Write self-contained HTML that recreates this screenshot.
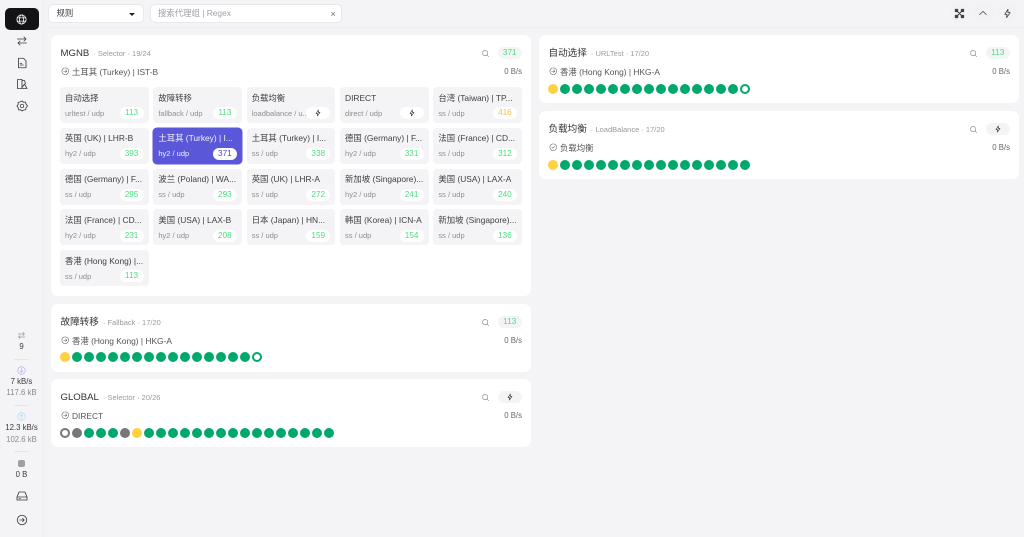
<!DOCTYPE html>
<html lang="zh"><head><meta charset="utf-8"><title>Proxies</title>
<style>
*{box-sizing:border-box;margin:0;padding:0}
html,body{width:1024px;height:537px;overflow:hidden;background:#f4f4f6}
body{font-family:"Liberation Sans","Noto Sans CJK SC",sans-serif;color:#3a3a3c;position:relative;font-size:8.4px;filter:blur(.25px)}
.abs{position:absolute}
.side{left:0;top:0;width:44px;height:537px;border-right:1px solid #efeff1}
.top{left:44px;top:0;width:980px;height:28px;border-bottom:1px solid #efeff1}
.act{left:5px;top:8px;width:34px;height:22px;background:#131315;border-radius:5px}
.ic{position:absolute;fill:none;stroke:#3c3c3e;stroke-width:1.7;stroke-linecap:round;stroke-linejoin:round}
.st{position:absolute;left:0;width:43px;text-align:center;font-size:7.8px;line-height:10px;white-space:nowrap}
.g{color:#8a8a8e}
.sep{position:absolute;left:14px;width:15px;height:1px;background:#e6e6e9}
.box{position:absolute;top:4px;height:18.5px;background:#fff;border:1px solid #e8e8ec;border-radius:5px;line-height:16.5px;white-space:nowrap}
.tb{position:absolute;top:4px;width:19px;height:19px;border-radius:50%;background:#f2f2f4}
.card{position:absolute;background:#fff;border-radius:7px;width:480px}
.title{position:absolute;left:9.5px;top:12.5px;font-size:9.6px;line-height:12px;white-space:nowrap;color:#333}
.title span{font-size:7.5px;color:#9a9a9e;margin-left:4px}
.cur{position:absolute;left:21px;top:30.5px;font-size:8.4px;line-height:12px;white-space:nowrap;color:#555}
.speed{position:absolute;right:9px;top:30.5px;font-size:7.8px;line-height:12px;color:#666}
.pill{position:absolute;right:9.5px;top:12px;width:23.5px;height:12px;border-radius:6px;background:#f4f4f6;text-align:center;font-size:8.2px;line-height:12px;color:#4ade80}
.grid{position:absolute;left:9px;top:52px;width:462px;display:grid;grid-template-columns:repeat(5,88.56px);grid-auto-rows:36px;gap:4.8px}
.t{position:relative;background:#f4f4f6;border-radius:4px;height:36px}
.n{position:absolute;left:5px;top:4.5px;font-size:8.4px;line-height:12px;white-space:nowrap;color:#3f3f42}
.s{position:absolute;left:5px;top:21.5px;font-size:7.5px;line-height:10px;white-space:nowrap;color:#8e8e92}
.d{position:absolute;right:5px;top:20.2px;width:24px;height:12px;border-radius:6px;background:#fff;text-align:center;font-size:8.2px;line-height:12px;color:#4ade80}
.y{color:#fbbf4a}
.on{background:#5b57d9;box-shadow:0 0 0 .5px #5b57d9}
.on .n,.on .s{color:#f2f2ff}
.on .d{color:#4a46c8}
.dots{position:absolute;left:9px;display:flex;gap:2px}
.dots i{display:block;width:10px;height:10px;border-radius:50%;background:#00a96b}
.dots i.a{background:#fdd13f}
.dots i.b{background:#777}
.dots i.o{background:#fff;border:2.4px solid #00a96b}
.dots i.p{background:#fff;border:2.4px solid #777}
</style></head><body>
<svg width="0" height="0" style="position:absolute"><defs>
<symbol id="bolt" viewBox="0 0 24 24"><path d="M13 3 6 14h5l-1 7 8-11h-5z"/></symbol>
<symbol id="search" viewBox="0 0 24 24"><circle cx="11" cy="11" r="7"/><path d="m16.5 16.5 4 4"/></symbol>
<symbol id="circ" viewBox="0 0 24 24"><circle cx="12" cy="12" r="9.5"/><path d="M7.5 12h9M13 8.5l3.5 3.5-3.5 3.5"/></symbol>
<symbol id="check" viewBox="0 0 24 24"><circle cx="12" cy="12" r="9.5"/><path d="m8 12 3 3 5-6"/></symbol>
<symbol id="swap" viewBox="0 0 24 24"><path d="M3 8h17M16 4l4 4-4 4M21 16H4M8 12l-4 4 4 4"/></symbol>
</defs></svg>

<div class="abs side">
<div class="abs act"></div>
<svg class="ic" style="left:16px;top:13.5px;stroke:#fff" width="11" height="11" viewBox="0 0 24 24"><circle cx="12" cy="12" r="10"/><ellipse cx="12" cy="12" rx="4.5" ry="10"/><path d="M2.5 8.5h19M2.5 15.5h19"/></svg>
<svg class="ic" style="left:15.500px;top:35px" width="12" height="12"><use href="#swap"/></svg>
<svg class="ic" style="left:15.500px;top:56.500px" width="12" height="12" viewBox="0 0 24 24"><path d="M5 2.500h10l5 5v14H5zM8.500 16h6M8.500 13h3"/></svg>
<svg class="ic" style="left:15.500px;top:78px" width="12" height="12" viewBox="0 0 24 24"><path d="M3 3h9v18H3zM12 5h5l2 6M12 21h10l-5-9-5 7"/></svg>
<svg class="ic" style="left:15.500px;top:100px" width="12" height="12" viewBox="0 0 24 24"><circle cx="12" cy="12" r="3.500"/><path d="M12 2l3 2.500 4-.5 1 4 3 4-3 3.500-.5 4-4 .5L12 22l-3-2.500-4 .5-.5-4L2 12l2.500-3.500-.5-4 4-.5z"/></svg>

<svg class="ic" style="left:17px;top:331px;stroke:#999" width="9" height="9"><use href="#swap"/></svg>
<div class="st" style="top:342px">9</div>
<div class="sep" style="top:359px"></div>
<svg class="ic" style="left:17px;top:366px;stroke:#b4b0f0" width="9" height="9" viewBox="0 0 24 24"><circle cx="12" cy="12" r="10"/><path d="M12 6v11M8 13l4 4 4-4"/></svg>
<div class="st" style="top:377px">7 kB/s</div>
<div class="st g" style="top:388px">117.6 kB</div>
<div class="sep" style="top:405px"></div>
<svg class="ic" style="left:17px;top:412px;stroke:#a5dcf8" width="9" height="9" viewBox="0 0 24 24"><circle cx="12" cy="12" r="10"/><path d="M12 18V7M8 11l4-4 4 4"/></svg>
<div class="st" style="top:423px">12.3 kB/s</div>
<div class="st g" style="top:435px">102.6 kB</div>
<div class="sep" style="top:451px"></div>
<div class="abs" style="left:18px;top:459.500px;width:7px;height:7px;border-radius:2px;background:#a0a0a3"></div>
<div class="st" style="top:470px">0 B</div>
<svg class="ic" style="left:15.500px;top:490px" width="12" height="12" viewBox="0 0 24 24"><path d="M6 4h12l4 10v6H2v-6zM2 14h20M6 17.500h3"/></svg>
<svg class="ic" style="left:15.500px;top:514px" width="12" height="12"><use href="#circ"/></svg>
</div>

<div class="abs top"></div>
<div class="box" style="left:48px;width:96px;padding-left:7.500px">规则<span class="abs" style="left:80px;top:7.500px;width:0;height:0;border:3px solid transparent;border-top:3px solid #222"></span></div>
<div class="box" style="left:149.500px;width:192.500px;padding-left:7.500px;color:#a0a0a4">搜索代理组 | Regex<span class="abs" style="left:180px;top:.5px;color:#666;font-size:9px">×</span></div>
<div class="tb" style="left:949.500px"></div><div class="tb" style="left:973.500px"></div><div class="tb" style="left:997.500px"></div>
<svg class="ic" style="left:953.500px;top:7.500px;stroke-width:2.200" width="11" height="11" viewBox="0 0 24 24"><path d="M3 3l18 18M21 3 3 21M3 3h5v5H3zM16 16h5v5h-5zM16 3h5v5h-5zM3 16h5v5H3z"/></svg>
<svg class="ic" style="left:978px;top:8px" width="10" height="10" viewBox="0 0 24 24"><path d="m4 16 8-8 8 8"/></svg>
<svg class="ic" style="left:1001.500px;top:7.500px" width="11" height="11"><use href="#bolt"/></svg>

<div class="card" style="left:51px;top:35px;height:261px">
<div class="title">MGNB<span>· Selector · 19/24</span></div>
<svg class="ic" style="left:9.750px;top:32px;stroke:#666;stroke-width:1.600" width="8.500" height="8.500"><use href="#circ"/></svg>
<div class="cur">土耳其 (Turkey) | IST-B</div>
<svg class="ic" style="left:430px;top:13.500px;stroke:#888" width="9" height="9"><use href="#search"/></svg>
<div class="pill">371</div><div class="speed">0 B/s</div>
<div class="grid">
<div class="t"><div class="n">自动选择</div><div class="s">urltest / udp</div><div class="d">113</div></div>
<div class="t"><div class="n">故障转移</div><div class="s">fallback / udp</div><div class="d">113</div></div>
<div class="t"><div class="n">负载均衡</div><div class="s">loadbalance / u...</div><div class="d"><svg class="ic" style="left:8px;top:2px;stroke-width:2" width="8" height="8"><use href="#bolt"/></svg></div></div>
<div class="t"><div class="n">DIRECT</div><div class="s">direct / udp</div><div class="d"><svg class="ic" style="left:8px;top:2px;stroke-width:2" width="8" height="8"><use href="#bolt"/></svg></div></div>
<div class="t"><div class="n">台湾 (Taiwan) | TP...</div><div class="s">ss / udp</div><div class="d y">416</div></div>
<div class="t"><div class="n">英国 (UK) | LHR-B</div><div class="s">hy2 / udp</div><div class="d">393</div></div>
<div class="t on"><div class="n">土耳其 (Turkey) | I...</div><div class="s">hy2 / udp</div><div class="d">371</div></div>
<div class="t"><div class="n">土耳其 (Turkey) | I...</div><div class="s">ss / udp</div><div class="d">338</div></div>
<div class="t"><div class="n">德国 (Germany) | F...</div><div class="s">hy2 / udp</div><div class="d">331</div></div>
<div class="t"><div class="n">法国 (France) | CD...</div><div class="s">ss / udp</div><div class="d">312</div></div>
<div class="t"><div class="n">德国 (Germany) | F...</div><div class="s">ss / udp</div><div class="d">295</div></div>
<div class="t"><div class="n">波兰 (Poland) | WA...</div><div class="s">ss / udp</div><div class="d">293</div></div>
<div class="t"><div class="n">英国 (UK) | LHR-A</div><div class="s">ss / udp</div><div class="d">272</div></div>
<div class="t"><div class="n">新加坡 (Singapore)...</div><div class="s">hy2 / udp</div><div class="d">241</div></div>
<div class="t"><div class="n">美国 (USA) | LAX-A</div><div class="s">ss / udp</div><div class="d">240</div></div>
<div class="t"><div class="n">法国 (France) | CD...</div><div class="s">hy2 / udp</div><div class="d">231</div></div>
<div class="t"><div class="n">美国 (USA) | LAX-B</div><div class="s">hy2 / udp</div><div class="d">208</div></div>
<div class="t"><div class="n">日本 (Japan) | HN...</div><div class="s">ss / udp</div><div class="d">159</div></div>
<div class="t"><div class="n">韩国 (Korea) | ICN-A</div><div class="s">ss / udp</div><div class="d">154</div></div>
<div class="t"><div class="n">新加坡 (Singapore)...</div><div class="s">ss / udp</div><div class="d">136</div></div>
<div class="t"><div class="n">香港 (Hong Kong) |...</div><div class="s">ss / udp</div><div class="d">113</div></div>
</div></div>

<div class="card" style="left:51px;top:304px;height:68px">
<div class="title">故障转移<span>· Fallback · 17/20</span></div>
<svg class="ic" style="left:9.750px;top:32px;stroke:#666;stroke-width:1.600" width="8.500" height="8.500"><use href="#circ"/></svg>
<div class="cur">香港 (Hong Kong) | HKG-A</div>
<svg class="ic" style="left:430px;top:13.500px;stroke:#888" width="9" height="9"><use href="#search"/></svg>
<div class="pill">113</div><div class="speed">0 B/s</div>
<div class="dots" style="top:48px"><i class="a"></i><i></i><i></i><i></i><i></i><i></i><i></i><i></i><i></i><i></i><i></i><i></i><i></i><i></i><i></i><i></i><i class="o"></i></div>
</div>

<div class="card" style="left:51px;top:379px;height:68px">
<div class="title">GLOBAL<span>· Selector · 20/26</span></div>
<svg class="ic" style="left:9.750px;top:32px;stroke:#666;stroke-width:1.600" width="8.500" height="8.500"><use href="#circ"/></svg>
<div class="cur">DIRECT</div>
<svg class="ic" style="left:430px;top:13.500px;stroke:#888" width="9" height="9"><use href="#search"/></svg>
<div class="pill"><svg class="ic" style="left:8px;top:2px;stroke-width:2" width="8" height="8"><use href="#bolt"/></svg></div><div class="speed">0 B/s</div>
<div class="dots" style="top:49px"><i class="p"></i><i class="b"></i><i></i><i></i><i></i><i class="b"></i><i class="a"></i><i></i><i></i><i></i><i></i><i></i><i></i><i></i><i></i><i></i><i></i><i></i><i></i><i></i><i></i><i></i><i></i></div>
</div>

<div class="card" style="left:539px;top:35px;height:68px">
<div class="title">自动选择<span>· URLTest · 17/20</span></div>
<svg class="ic" style="left:9.750px;top:32px;stroke:#666;stroke-width:1.600" width="8.500" height="8.500"><use href="#circ"/></svg>
<div class="cur">香港 (Hong Kong) | HKG-A</div>
<svg class="ic" style="left:430px;top:13.500px;stroke:#888" width="9" height="9"><use href="#search"/></svg>
<div class="pill">113</div><div class="speed">0 B/s</div>
<div class="dots" style="top:49px"><i class="a"></i><i></i><i></i><i></i><i></i><i></i><i></i><i></i><i></i><i></i><i></i><i></i><i></i><i></i><i></i><i></i><i class="o"></i></div>
</div>

<div class="card" style="left:539px;top:111px;height:68px">
<div class="title">负载均衡<span>· LoadBalance · 17/20</span></div>
<svg class="ic" style="left:9.750px;top:32px;stroke:#666;stroke-width:1.600" width="8.500" height="8.500"><use href="#check"/></svg>
<div class="cur">负载均衡</div>
<svg class="ic" style="left:430px;top:13.500px;stroke:#888" width="9" height="9"><use href="#search"/></svg>
<div class="pill"><svg class="ic" style="left:8px;top:2px;stroke-width:2" width="8" height="8"><use href="#bolt"/></svg></div><div class="speed">0 B/s</div>
<div class="dots" style="top:49px"><i class="a"></i><i></i><i></i><i></i><i></i><i></i><i></i><i></i><i></i><i></i><i></i><i></i><i></i><i></i><i></i><i></i><i></i></div>
</div>
</body></html>
